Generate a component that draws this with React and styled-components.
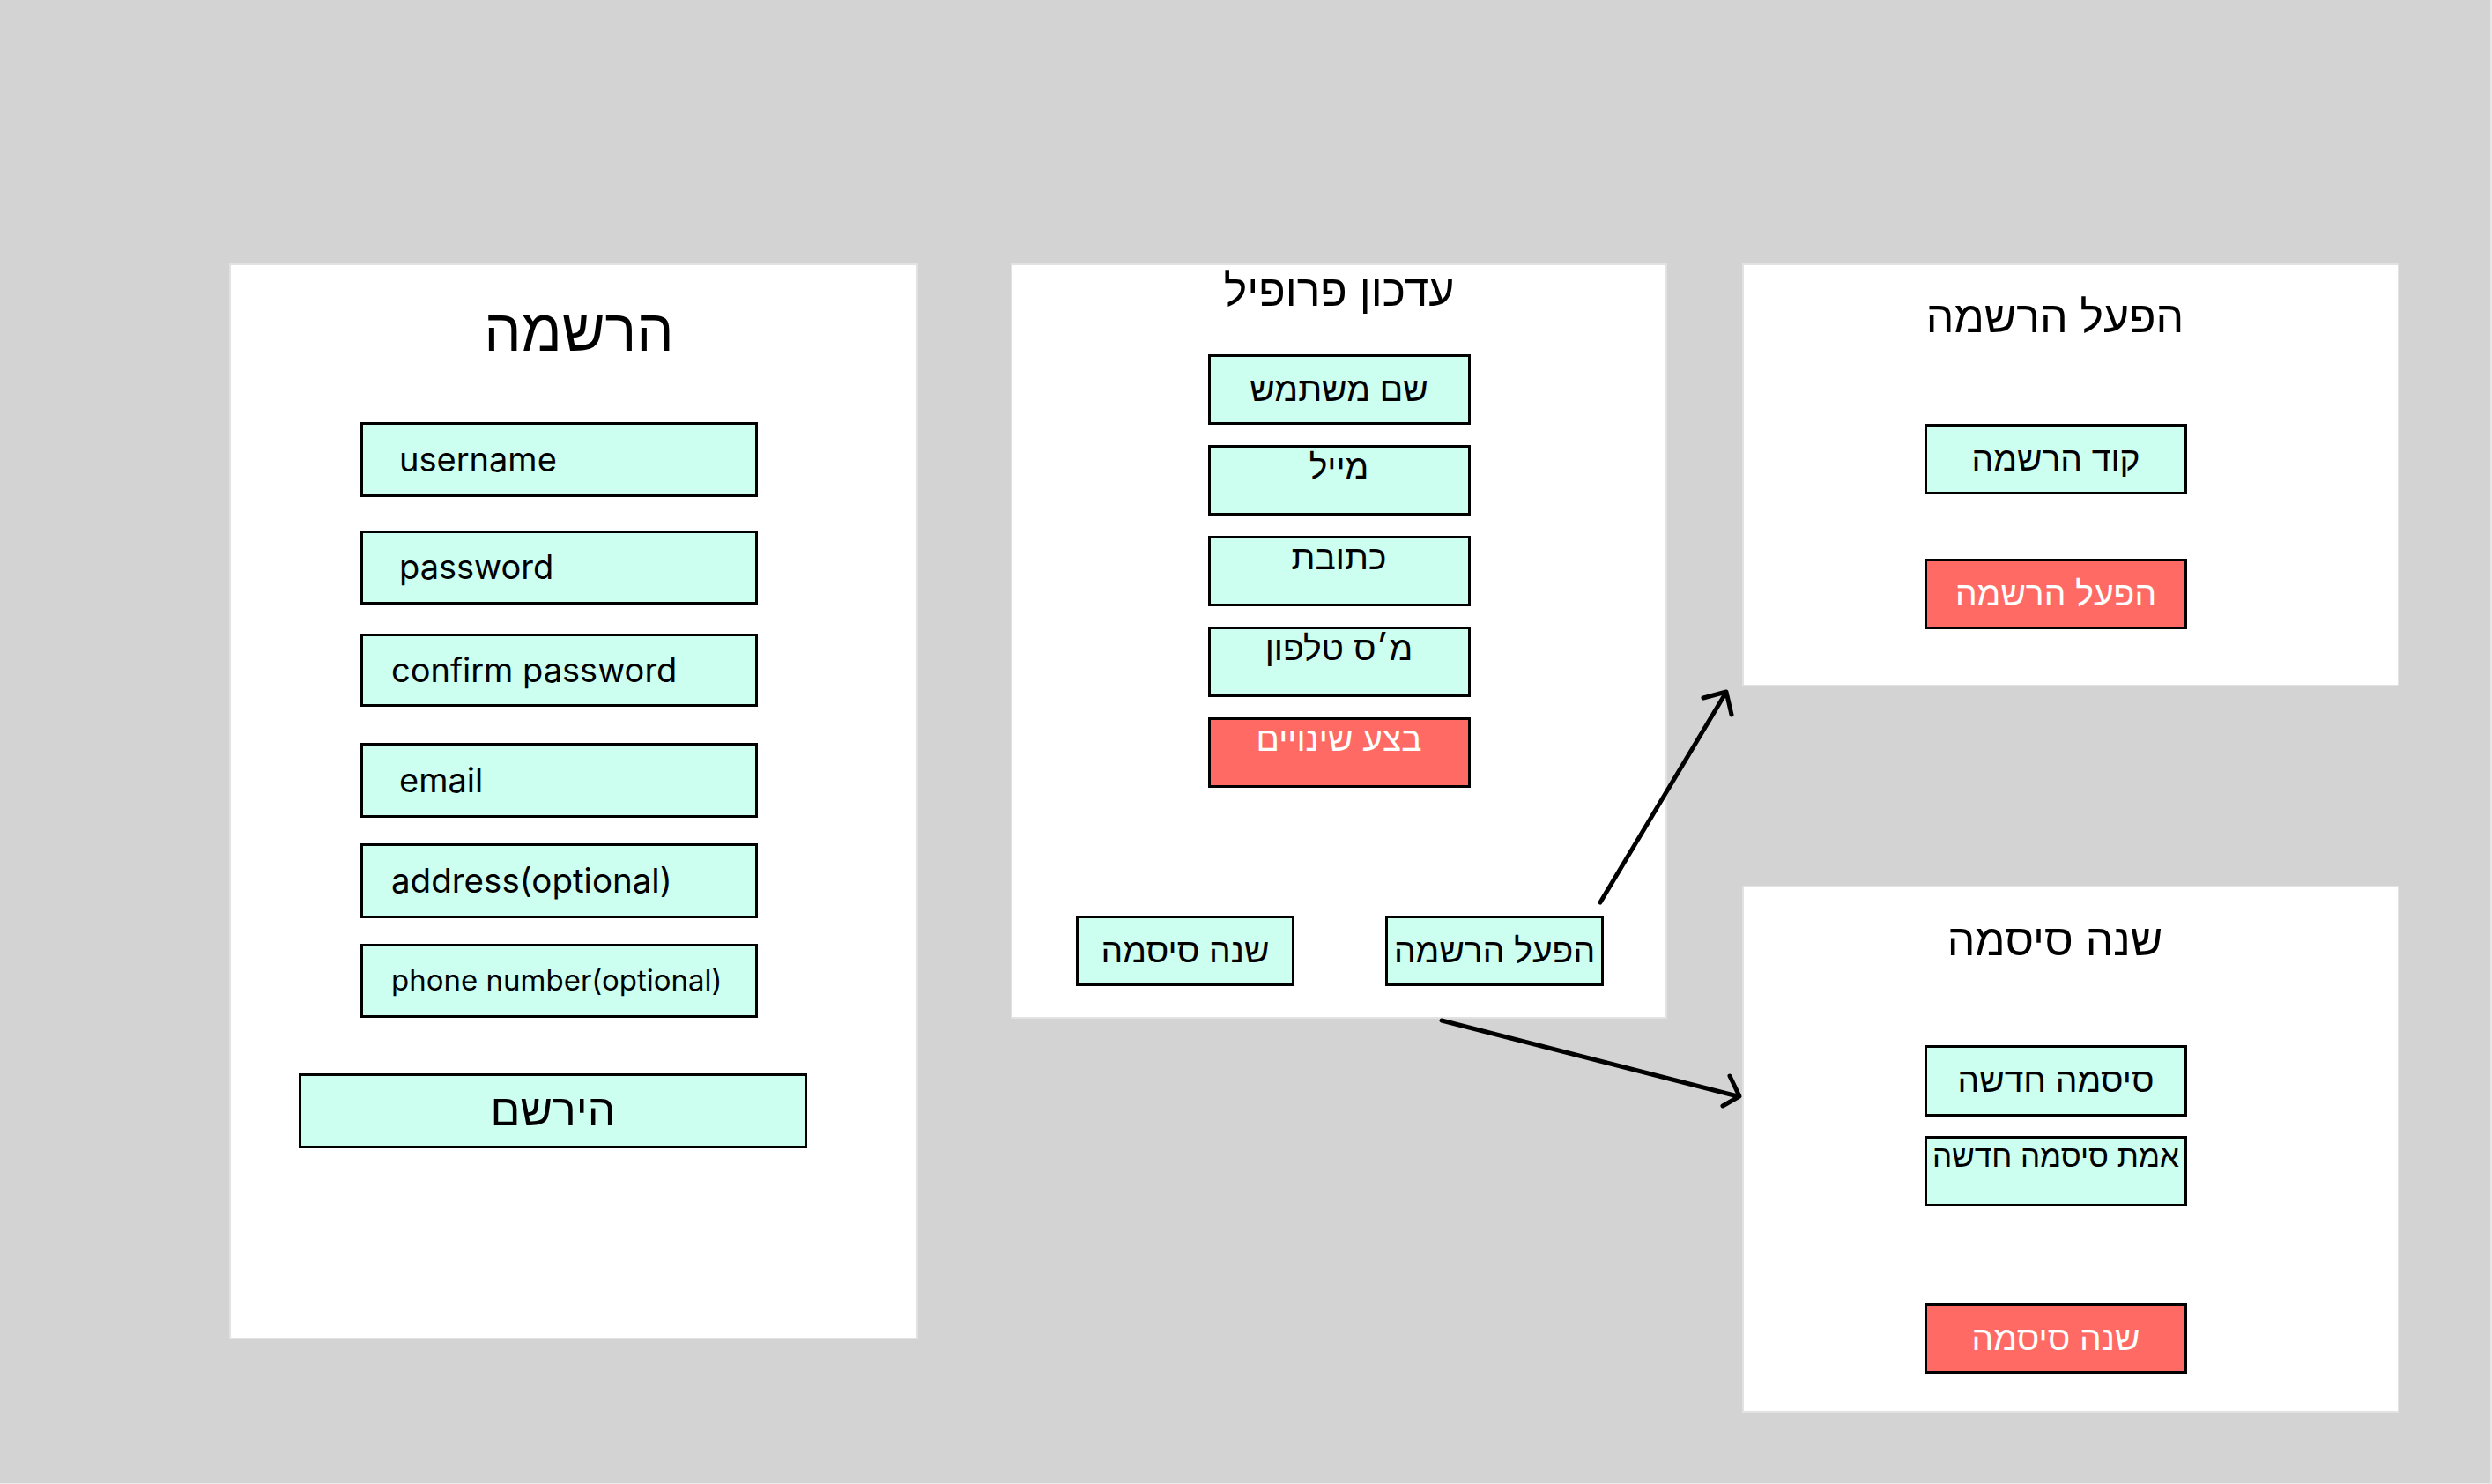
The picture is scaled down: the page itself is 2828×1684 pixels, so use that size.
import React from "react";
import styled, { createGlobalStyle } from "styled-components";

const GlobalStyle = createGlobalStyle`
  html, body {
    margin: 0;
    padding: 0;
    background: #d3d3d3;
  }
  body {
    font-family: Inter, "Liberation Sans", sans-serif;
    color: #000;
  }
`;

const Canvas = styled.div`
  position: relative;
  box-sizing: border-box;
  width: 2828px;
  height: 1684px;
  padding: 299px 0 0 260px;
  display: flex;
  align-items: flex-start;
  background: #d3d3d3;
  border-bottom: 1px solid #ebebeb;
  border-right: 2px solid #e6e6e6;
  overflow: hidden;
`;

const Column = styled.div`
  display: flex;
  flex-direction: column;
  gap: 226px;
  margin-left: ${(p) => p.$ml || 0}px;
`;

const Panel = styled.section`
  box-sizing: border-box;
  width: ${(p) => p.$w}px;
  height: ${(p) => p.$h}px;
  margin-left: ${(p) => p.$ml || 0}px;
  background: #fff;
  border: 2px solid #e2e2e2;
  display: flex;
  flex-direction: column;
  align-items: center;
`;

const Title = styled.h1`
  margin: ${(p) => p.$mt}px 0 0;
  font-family: "Liberation Sans", sans-serif;
  font-weight: 400;
  font-size: ${(p) => p.$size}px;
  line-height: 1;
  height: ${(p) => p.$size}px;
  white-space: nowrap;
  transform: translateX(${(p) => p.$dx || 0}px);
`;

const Field = styled.div`
  box-sizing: border-box;
  flex: none;
  width: ${(p) => p.$w}px;
  height: ${(p) => p.$h}px;
  margin-top: ${(p) => p.$mt || 0}px;
  margin-left: ${(p) => (p.$ml !== undefined ? `${p.$ml}px` : "0")};
  align-self: ${(p) => (p.$ml !== undefined ? "flex-start" : "center")};
  background: ${(p) => (p.$red ? "#ff6b64" : "#ccfff0")};
  color: ${(p) => (p.$red ? "#fff" : "#000")};
  border: 3px solid #000;
  display: flex;
  align-items: ${(p) => (p.$top ? "flex-start" : "center")};
  justify-content: ${(p) => (p.$left ? "flex-start" : "center")};
  padding: 0 0 0 ${(p) => p.$pl || 0}px;
  font-family: ${(p) => (p.$he ? '"Liberation Sans", sans-serif' : 'Inter, "Liberation Sans", sans-serif')};
  font-size: ${(p) => p.$fs || 39}px;
  line-height: 1.15;
  white-space: nowrap;
`;

const ButtonRow = styled.div`
  display: flex;
  gap: 103px;
  align-self: flex-start;
  margin: ${(p) => p.$mt}px 0 0 ${(p) => p.$ml}px;
`;

const Arrows = styled.svg`
  position: absolute;
  left: 0;
  top: 0;
  pointer-events: none;
`;

const RegisterPanel = () => (
  <Panel $w={782} $h={1221}>
    <Title $size={67} $mt={40} $dx={6}>הרשמה</Title>
    <Field $w={451} $h={85} $mt={71} $ml={147} $left $pl={41} $fs={38}>username</Field>
    <Field $w={451} $h={84} $mt={38} $ml={147} $left $pl={41} $fs={38}>password</Field>
    <Field $w={451} $h={83} $mt={33} $ml={147} $left $pl={32} $fs={38}>confirm password</Field>
    <Field $w={451} $h={85} $mt={41} $ml={147} $left $pl={41} $fs={38}>email</Field>
    <Field $w={451} $h={85} $mt={29} $ml={147} $left $pl={32} $fs={38.5}>address(optional)</Field>
    <Field $w={451} $h={84} $mt={29} $ml={147} $left $pl={32} $fs={33}>phone number(optional)</Field>
    <Field $w={577} $h={85} $mt={63} $ml={77} $fs={50} $he>הירשם</Field>
  </Panel>
);

const ProfilePanel = () => (
  <Panel $w={745} $h={857} $ml={105}>
    <Title $size={50} $mt={4}>עדכון פרופיל</Title>
    <Field $w={298} $h={80} $mt={47} $he>שם משתמש</Field>
    <Field $w={298} $h={80} $mt={23} $top $he>מייל</Field>
    <Field $w={298} $h={80} $mt={23} $top $he>כתובת</Field>
    <Field $w={298} $h={80} $mt={23} $top $he>מ׳ס טלפון</Field>
    <Field $w={298} $h={80} $mt={23} $top $red $he>בצע שינויים</Field>
    <ButtonRow $mt={145} $ml={72}>
      <Field $w={248} $h={80} $he>שנה סיסמה</Field>
      <Field $w={248} $h={80} $he>הפעל הרשמה</Field>
    </ButtonRow>
  </Panel>
);

const ActivatePanel = () => (
  <Panel $w={746} $h={480}>
    <Title $size={50} $mt={34} $dx={-18}>הפעל הרשמה</Title>
    <Field $w={298} $h={80} $mt={96} $ml={205} $he>קוד הרשמה</Field>
    <Field $w={298} $h={80} $mt={73} $ml={205} $red $he>הפעל הרשמה</Field>
  </Panel>
);

const PasswordPanel = () => (
  <Panel $w={746} $h={598}>
    <Title $size={50} $mt={35} $dx={-18}>שנה סיסמה</Title>
    <Field $w={298} $h={81} $mt={94} $ml={205} $he>סיסמה חדשה</Field>
    <Field $w={298} $h={80} $mt={22} $ml={205} $top $fs={35} $he>אמת סיסמה חדשה</Field>
    <Field $w={298} $h={80} $mt={110} $ml={205} $red $he>שנה סיסמה</Field>
  </Panel>
);

const App = () => (
  <>
    <GlobalStyle />
    <Canvas>
      <RegisterPanel />
      <ProfilePanel />
      <Column $ml={85}>
        <ActivatePanel />
        <PasswordPanel />
      </Column>
      <Arrows width="2828" height="1684" viewBox="0 0 2828 1684">
        <g fill="none" stroke="#000" strokeWidth="5" strokeLinecap="round" strokeLinejoin="round">
          <path d="M1816 1024 L1958 787" />
          <path d="M1933 792 L1959 785 L1965 811" />
          <path d="M1636 1158 L1972 1244" />
          <path d="M1963 1221 L1974 1244 L1955 1255" />
        </g>
      </Arrows>
    </Canvas>
  </>
);

export default App;
